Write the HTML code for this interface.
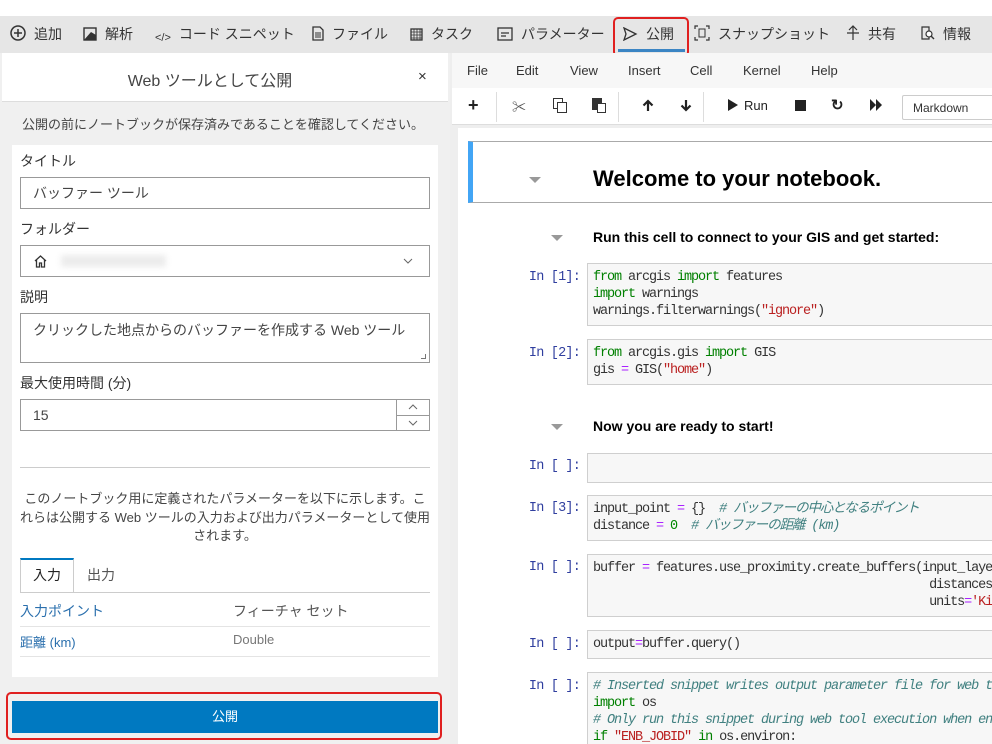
<!DOCTYPE html>
<html><head><meta charset="utf-8">
<style>
*{box-sizing:border-box;margin:0;padding:0}
body{width:992px;height:744px;overflow:hidden;background:#fff;font-family:"Liberation Sans","Noto Sans CJK JP",sans-serif;position:relative;color:#333}
.a{position:absolute}
.tb{top:16px;left:0;width:992px;height:37px;background:#e6e6e6}
.ti{top:24px;font-size:14px;color:#333;white-space:nowrap}
.ico{display:inline-block;vertical-align:-2px;margin-right:8px}
.panel{left:0;top:53px;width:450px;height:691px;background:#f0f0f0}
.lbl{font-size:14px;color:#333}
.inp{border:1px solid #999;background:#fff;left:20px;width:410px;font-size:14px;color:#444;padding-left:12px}
.menu{font-size:13px;color:#333;top:63px}
.mono{font-family:"Liberation Mono","Noto Sans CJK JP",monospace;font-size:13.5px;letter-spacing:-1.1px;line-height:17px;white-space:pre;color:#333}
.cell{left:587px;width:405px;background:#f7f7f7;border:1px solid #cfcfcf;border-right:none;padding:5px 5px;overflow:hidden}
.pr{font-family:"Liberation Mono",monospace;font-size:13.5px;letter-spacing:-0.8px;color:#303f9f;width:60px;text-align:right;left:520px}
.k{color:#008000}.s{color:#ba2121}.o{color:#aa22ff}.c{color:#408080;font-style:italic}
.h{font-weight:bold;color:#000}
.tri{width:0;height:0;border-left:6px solid transparent;border-right:6px solid transparent;border-top:6px solid #999}
</style></head><body>
<div class="a tb"></div>
<div class="a ti" style="left:10px"><svg class="ico" width="16" height="16" viewBox="0 0 16 16"><circle cx="8" cy="8" r="7" fill="none" stroke="#333" stroke-width="1.5"/><path d="M8 4v8M4 8h8" stroke="#333" stroke-width="1.5"/></svg>追加</div>
<div class="a ti" style="left:83px"><svg class="ico" width="14" height="14" viewBox="0 0 14 14"><rect x="1" y="1" width="12" height="12" fill="none" stroke="#333" stroke-width="1.4"/><path d="M1 13L8 5l5 3v5z" fill="#333"/></svg>解析</div>
<div class="a ti" style="left:155px"><span class="ico" style="font-size:11px">&lt;/&gt;</span>コード スニペット</div>
<div class="a ti" style="left:312px"><svg class="ico" width="12" height="15" viewBox="0 0 12 15"><path d="M1 1h7l3 3v10H1z" fill="none" stroke="#333" stroke-width="1.3"/><path d="M3 7h6M3 9h6M3 11h6" stroke="#333"/></svg>ファイル</div>
<div class="a ti" style="left:410px"><svg class="ico" width="13" height="14" viewBox="0 0 13 14"><rect x="1" y="2" width="11" height="11" fill="none" stroke="#333" stroke-width="1.3"/><path d="M1 5h11M1 8h11M1 11h11M4 2v11M7 2v11M10 2v11" stroke="#333" stroke-width=".8"/></svg>タスク</div>
<div class="a ti" style="left:497px"><svg class="ico" width="16" height="14" viewBox="0 0 16 14"><rect x="1" y="1" width="14" height="12" fill="none" stroke="#333" stroke-width="1.3"/><path d="M4 6h8M4 9h5" stroke="#333" stroke-width="1.2"/></svg>パラメーター</div>
<div class="a ti" style="left:622px"><svg class="ico" width="16" height="14" viewBox="0 0 16 14"><path d="M2 1l12 6-12 6 2-6z" fill="none" stroke="#333" stroke-width="1.3"/></svg>公開</div>
<div class="a" style="left:618px;top:49px;width:67px;height:3px;background:#3b85c4"></div>
<div class="a" style="left:613px;top:17px;width:76px;height:40px;border:2px solid #e02020;border-radius:5px"></div>
<div class="a ti" style="left:694px"><svg class="ico" width="16" height="16" viewBox="0 0 16 16"><path d="M1 4V1h3M12 1h3v3M15 12v3h-3M4 15H1v-3" fill="none" stroke="#333" stroke-width="1.2"/><rect x="5" y="4" width="6" height="8" fill="none" stroke="#333"/></svg>スナップショット</div>
<div class="a ti" style="left:846px"><svg class="ico" width="14" height="16" viewBox="0 0 14 16"><path d="M7 1v14M3 5l4-4 4 4M1 8h12" fill="none" stroke="#333" stroke-width="1.2"/></svg>共有</div>
<div class="a ti" style="left:919px"><svg class="ico" width="16" height="16" viewBox="0 0 16 16"><path d="M3 2h7v12H3z" fill="none" stroke="#333" stroke-width="1.2"/><circle cx="10" cy="9" r="3" fill="#fff" stroke="#333" stroke-width="1.2"/><path d="M12 11l3 3" stroke="#333" stroke-width="1.4"/></svg>情報</div>

<div class="a panel"></div>
<div class="a" style="left:2px;top:53px;width:446px;height:49px;background:#fff;border-bottom:1px solid #ddd"></div>
<div class="a" style="left:0;top:67px;width:420px;text-align:center;font-size:16px;color:#444">Web ツールとして公開</div>
<div class="a" style="left:418px;top:68px;font-size:15px;color:#333">×</div>
<div class="a" style="left:0;top:114px;width:446px;text-align:center;font-size:13px;color:#444">公開の前にノートブックが保存済みであることを確認してください。</div>
<div class="a" style="left:12px;top:145px;width:426px;height:532px;background:#fff"></div>
<div class="a lbl" style="left:20px;top:151px">タイトル</div>
<div class="a inp" style="top:177px;height:32px;line-height:30px">バッファー ツール</div>
<div class="a lbl" style="left:20px;top:219px">フォルダー</div>
<div class="a inp" style="top:245px;height:32px"><svg style="position:absolute;left:12px;top:8px" width="15" height="15" viewBox="0 0 15 15"><path d="M2 7l5.5-5 5.5 5M3.5 6v7h3v-4h2v4h3V6" fill="none" stroke="#333" stroke-width="1.3"/></svg><div style="position:absolute;left:40px;top:9px;width:105px;height:12px;background:#ececec;filter:blur(3px)"></div><svg style="position:absolute;right:16px;top:12px" width="10" height="6" viewBox="0 0 10 6"><path d="M1 1l4 4 4-4" fill="none" stroke="#666"/></svg></div>
<div class="a lbl" style="left:20px;top:287px">説明</div>
<div class="a inp" style="top:313px;height:50px;padding-top:6px">クリックした地点からのバッファーを作成する Web ツール<div style="position:absolute;right:3px;bottom:3px;width:5px;height:5px;border-right:1px solid #777;border-bottom:1px solid #777"></div></div>
<div class="a lbl" style="left:20px;top:373px">最大使用時間 (分)</div>
<div class="a inp" style="top:399px;height:32px;line-height:30px">15<div style="position:absolute;right:0;top:0;width:33px;height:30px;border-left:1px solid #999"><svg style="position:absolute;left:11px;top:4px" width="10" height="6" viewBox="0 0 10 6"><path d="M1 5l4-4 4 4" fill="none" stroke="#666"/></svg><div style="position:absolute;left:0;top:15px;width:32px;height:1px;background:#999"></div><svg style="position:absolute;left:11px;top:20px" width="10" height="6" viewBox="0 0 10 6"><path d="M1 1l4 4 4-4" fill="none" stroke="#666"/></svg></div></div>
<div class="a" style="left:20px;top:467px;width:410px;height:1px;background:#ccc"></div>
<div class="a" style="left:20px;top:490px;width:410px;text-align:center;font-size:13px;line-height:18.5px;color:#444">このノートブック用に定義されたパラメーターを以下に示します。これらは公開する Web ツールの入力および出力パラメーターとして使用されます。</div>
<div class="a" style="left:20px;top:558px;width:54px;height:35px;border:1px solid #ccc;border-top:2px solid #0079c1;border-bottom:none;background:#fff;text-align:center;line-height:30px;font-size:14px;color:#222">入力</div>
<div class="a" style="left:87px;top:565px;font-size:14px;color:#555">出力</div>
<div class="a" style="left:20px;top:592px;width:410px;height:1px;background:#ccc"></div>
<div class="a" style="left:20px;top:601px;font-size:14px;color:#2a6fad">入力ポイント</div>
<div class="a" style="left:233px;top:601px;font-size:14px;color:#555">フィーチャ セット</div>
<div class="a" style="left:20px;top:626px;width:410px;height:1px;background:#e4e4e4"></div>
<div class="a" style="left:20px;top:632px;font-size:13px;color:#2a6fad">距離 (km)</div>
<div class="a" style="left:233px;top:632px;font-size:13px;color:#777">Double</div>
<div class="a" style="left:20px;top:656px;width:410px;height:1px;background:#e4e4e4"></div>
<div class="a" style="left:12px;top:701px;width:426px;height:32px;background:#0079c1;color:#fff;text-align:center;line-height:32px;font-size:13px">公開</div>
<div class="a" style="left:6px;top:692px;width:436px;height:48px;border:2px solid #e02020;border-radius:5px"></div>

<div class="a" style="left:450px;top:53px;width:542px;height:691px;background:#eee"></div>
<div class="a" style="left:452px;top:53px;width:540px;height:35px;background:#f7f7f7"></div>
<div class="a menu" style="left:467px">File</div>
<div class="a menu" style="left:516px">Edit</div>
<div class="a menu" style="left:570px">View</div>
<div class="a menu" style="left:628px">Insert</div>
<div class="a menu" style="left:690px">Cell</div>
<div class="a menu" style="left:743px">Kernel</div>
<div class="a menu" style="left:811px">Help</div>
<div class="a" style="left:452px;top:88px;width:540px;height:37px;background:#fff;border-bottom:1px solid #ddd"></div>
<div class="a" style="left:468px;top:95px;font-size:18px;font-weight:bold;color:#222">+</div>
<div class="a" style="left:496px;top:92px;width:1px;height:30px;background:#ddd"></div>
<div class="a" style="left:512px;top:97px;font-size:14px;color:#555">✂</div>
<div class="a" style="left:553px;top:98px;width:10px;height:11px;border:1px solid #333;background:#fff"></div><div class="a" style="left:557px;top:102px;width:10px;height:11px;border:1px solid #333;background:#fff"></div>
<div class="a" style="left:592px;top:98px;width:10px;height:12px;background:#333"></div><div class="a" style="left:597px;top:103px;width:9px;height:10px;border:1px solid #333;background:#fff"></div>
<div class="a" style="left:618px;top:92px;width:1px;height:30px;background:#ddd"></div>
<svg class="a" style="left:642px;top:99px" width="12" height="13" viewBox="0 0 12 13"><path d="M6 12V2M1.5 6.5L6 2l4.5 4.5" fill="none" stroke="#222" stroke-width="2.2"/></svg>
<svg class="a" style="left:680px;top:99px" width="12" height="13" viewBox="0 0 12 13"><path d="M6 1v10M1.5 6.5L6 11l4.5-4.5" fill="none" stroke="#222" stroke-width="2.2"/></svg>
<div class="a" style="left:703px;top:92px;width:1px;height:30px;background:#ddd"></div>
<div class="a" style="left:728px;top:99px;width:0;height:0;border-left:10px solid #222;border-top:6px solid transparent;border-bottom:6px solid transparent"></div>
<div class="a" style="left:744px;top:98px;font-size:13px;color:#222">Run</div>
<div class="a" style="left:795px;top:100px;width:11px;height:11px;background:#222"></div>
<div class="a" style="left:831px;top:96px;font-size:15px;font-weight:bold;color:#222">↻</div>
<div class="a" style="left:870px;top:99px;width:0;height:0;border-left:6px solid #222;border-top:6px solid transparent;border-bottom:6px solid transparent"></div><div class="a" style="left:876px;top:99px;width:0;height:0;border-left:6px solid #222;border-top:6px solid transparent;border-bottom:6px solid transparent"></div>
<div class="a" style="left:902px;top:95px;width:90px;height:25px;border:1px solid #ccc;border-right:none;border-radius:2px 0 0 2px;font-size:12px;color:#333;padding:5px 10px">Markdown</div>

<div class="a" style="left:458px;top:128px;width:534px;height:616px;background:#fff"></div>
<div class="a" style="left:468px;top:141px;width:524px;height:62px;border:1px solid #aaa;border-left:5px solid #42a5f5;border-right:none"></div>
<div class="a tri" style="left:529px;top:177px"></div>
<div class="a h" style="left:593px;top:166px;font-size:22px">Welcome to your notebook.</div>
<div class="a tri" style="left:551px;top:235px"></div>
<div class="a h" style="left:593px;top:229px;font-size:14px">Run this cell to connect to your GIS and get started:</div>
<div class="a pr" style="top:270px">In [1]:</div>
<div class="a cell mono" style="top:263px;height:63px"><span class="k">from</span> arcgis <span class="k">import</span> features
<span class="k">import</span> warnings
warnings.filterwarnings(<span class="s">"ignore"</span>)</div>
<div class="a pr" style="top:346px">In [2]:</div>
<div class="a cell mono" style="top:339px;height:46px"><span class="k">from</span> arcgis.gis <span class="k">import</span> GIS
gis <span class="o">=</span> GIS(<span class="s">"home"</span>)</div>
<div class="a tri" style="left:551px;top:424px"></div>
<div class="a h" style="left:593px;top:418px;font-size:14px">Now you are ready to start!</div>
<div class="a pr" style="top:459px">In [ ]:</div>
<div class="a cell mono" style="top:453px;height:30px"></div>
<div class="a pr" style="top:501px">In [3]:</div>
<div class="a cell mono" style="top:495px;height:46px">input_point <span class="o">=</span> {}  <span class="c"># バッファーの中心となるポイント</span>
distance <span class="o">=</span> <span style="color:#080">0</span>  <span class="c"># バッファーの距離 (km)</span></div>
<div class="a pr" style="top:560px">In [ ]:</div>
<div class="a cell mono" style="top:554px;height:63px">buffer <span class="o">=</span> features.use_proximity.create_buffers(input_laye
                                                distances<span class="o">=</span>
                                                units<span class="o">=</span><span class="s">'Kil</span></div>
<div class="a pr" style="top:637px">In [ ]:</div>
<div class="a cell mono" style="top:630px;height:29px">output<span class="o">=</span>buffer.query()</div>
<div class="a pr" style="top:679px">In [ ]:</div>
<div class="a cell mono" style="top:672px;height:72px;border-bottom:none"><span class="c"># Inserted snippet writes output parameter file for web t</span>
<span class="k">import</span> os
<span class="c"># Only run this snippet during web tool execution when en</span>
<span class="k">if</span> <span class="s">"ENB_JOBID"</span> <span class="k">in</span> os.environ:</div>
</body></html>
